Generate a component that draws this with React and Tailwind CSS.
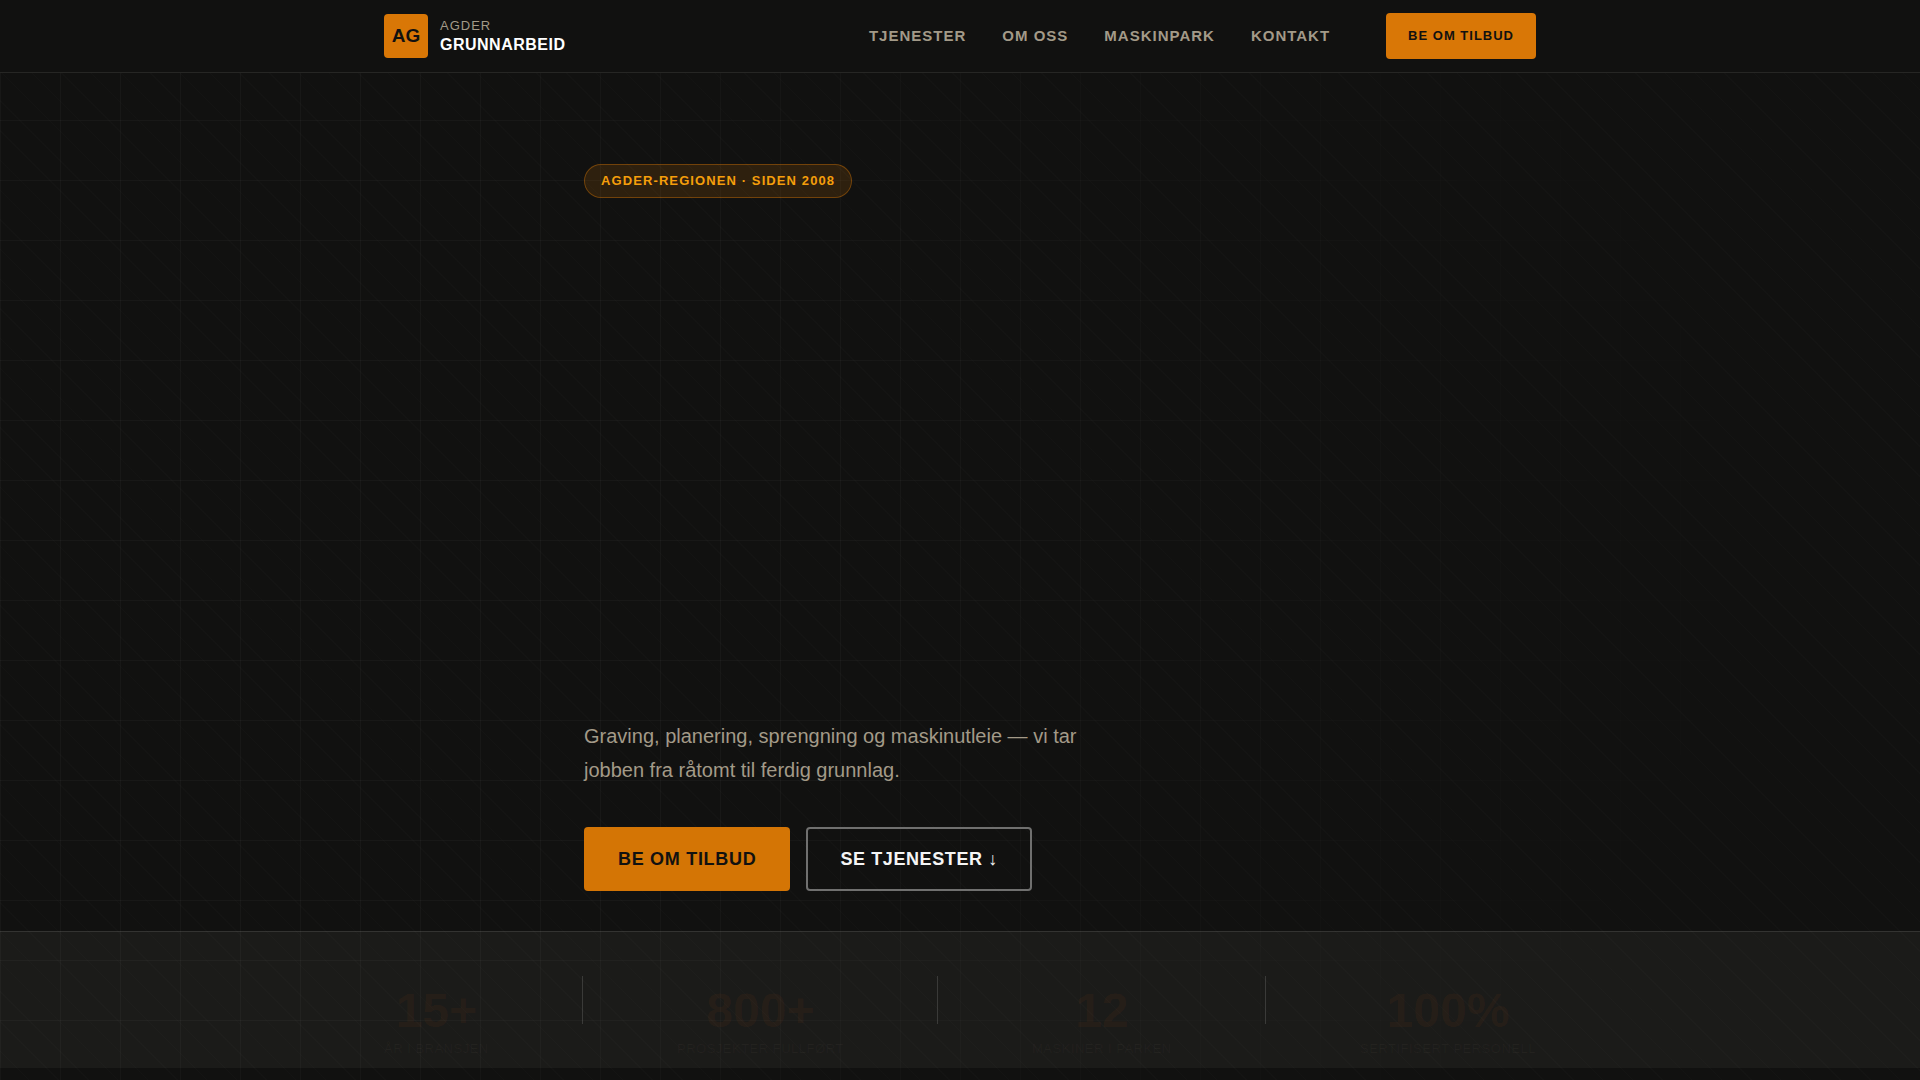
const navLinks = [
  { label: 'Tjenester', href: '#tjenester' },
  { label: 'Om oss', href: '#om-oss' },
  { label: 'Maskinpark', href: '#maskinpark' },
  { label: 'Kontakt', href: '#kontakt' },
];

const stats = [
  { value: '15+', label: 'År i bransjen' },
  { value: '800+', label: 'Prosjekter fullført' },
  { value: '12', label: 'Maskiner i parken' },
  { value: '100%', label: 'Sertifisert personell' },
];

function Header() {
  return (
    <header className="relative z-20 border-b border-[#262624] bg-[#111110]">
      <div className="mx-auto flex h-[72px] max-w-[1200px] items-center justify-between px-6">
        <a href="#top" className="flex items-center gap-3">
          <span className="flex size-11 items-center justify-center rounded bg-[#d97706] text-[19px] font-bold text-[#111110]">AG</span>
          <span className="flex flex-col uppercase">
            <span className="text-[13px] leading-[18px] tracking-[1px] text-[#a39a88]">Agder</span>
            <span className="text-base leading-5 font-bold tracking-[0.5px] text-white">Grunnarbeid</span>
          </span>
        </a>
        <div className="flex items-center gap-14">
          <nav className="flex items-center gap-9">
            {navLinks.map((link) => (
              <a key={link.href} href={link.href} className="text-[15px] font-bold tracking-[1px] text-[#a39a88] uppercase">
                {link.label}
              </a>
            ))}
          </nav>
          <a href="#kontakt" className="rounded bg-[#d97706] px-[22px] py-[13px] text-[13px] leading-5 font-bold tracking-[1px] text-[#111110] uppercase">
            Be om tilbud
          </a>
        </div>
      </div>
    </header>
  );
}

// Grid that fades out to the right, with thin diagonal stripes on top
function Pattern() {
  return (
    <div className="pointer-events-none absolute inset-0 z-[1]" aria-hidden="true">
      <div className="absolute inset-0 bg-[linear-gradient(rgba(255,255,255,0.03)_1px,transparent_1px),linear-gradient(90deg,rgba(255,255,255,0.03)_1px,transparent_1px)] bg-[size:60px_60px] [mask-image:radial-gradient(ellipse_100%_100%_at_0%_50%,black_45%,transparent_100%)]" />
      <div className="absolute inset-0 bg-[repeating-linear-gradient(45deg,transparent,transparent_20px,rgba(255,255,255,0.013)_20px,rgba(255,255,255,0.013)_21px)]" />
    </div>
  );
}

function Hero() {
  return (
    <section className="relative z-[2] mx-auto max-w-[800px] px-6 pt-[91px] pb-10">
      <div className="mb-[521px] flex">
        <p className="rounded-full border border-[#d97706]/40 bg-[#d97706]/15 px-4 py-1.5 text-[13px] leading-5 font-bold tracking-[1.1px] text-[#f59e0b] uppercase">
          Agder-regionen · Siden 2008
        </p>
      </div>
      <p className="mb-10 max-w-[520px] text-xl leading-[34px] text-[#a39a88]">
        Graving, planering, sprengning og maskinutleie — vi tar jobben fra råtomt til ferdig grunnlag.
      </p>
      <div className="flex gap-4">
        <a href="#kontakt" className="rounded bg-[#d47505] px-[34px] py-5 text-lg leading-6 font-bold tracking-[0.7px] text-[#111110] uppercase">
          Be om tilbud
        </a>
        <a href="#tjenester" className="rounded border-2 border-[#70706f] px-8 py-[18px] text-lg leading-6 font-bold tracking-[0.6px] text-[#f5f5f4] uppercase">
          Se tjenester ↓
        </a>
      </div>
    </section>
  );
}

function Stats() {
  return (
    <section className="border-t border-[#333331] bg-[#1b1b19]">
      <div className="mx-auto flex max-w-[1200px] items-start justify-between px-6 pt-11 pb-2">
        {stats.map((stat, i) => (
          <div key={stat.label} className="contents">
            {i > 0 && <div className="h-12 w-px bg-[#3a3a38]" />}
            <div className="flex flex-col items-center gap-[3px] pt-[11px] whitespace-nowrap">
              <div className="text-5xl leading-12 font-bold text-[#c2570c]/7">{stat.value}</div>
              <div className="text-[13px] leading-[22px] tracking-[0.5px] text-[#a39a88]/6 uppercase">{stat.label}</div>
            </div>
          </div>
        ))}
      </div>
    </section>
  );
}

function App() {
  return (
    <div id="top" className="relative min-h-screen bg-[#111110] font-['Liberation_Sans',Arial,sans-serif]">
      <Header />
      <Pattern />
      <main>
        <Hero />
        <Stats />
      </main>
    </div>
  );
}

export default App;
